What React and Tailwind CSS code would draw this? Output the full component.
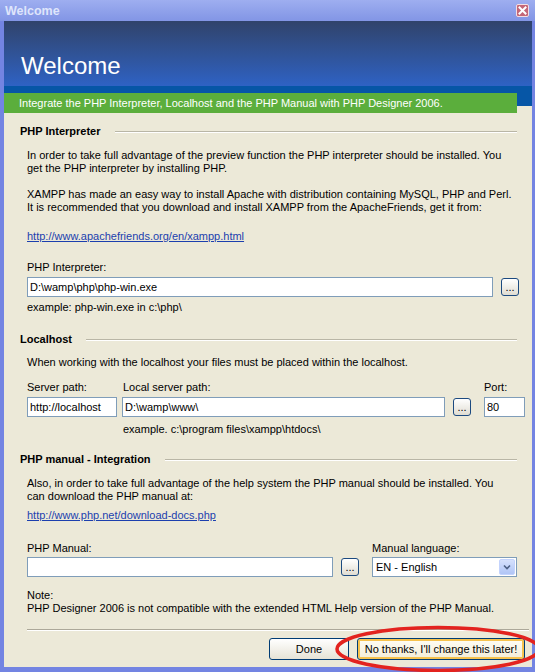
import React from "react";

function Dots() {
  return (
    <div className="w-[18px] h-[18px] shrink-0 rounded-[3px] border border-[#1c4a80] bg-gradient-to-b from-[#ffffff] to-[#e0ddd2] flex items-end justify-center text-[11px] leading-[12px] pb-[2px] text-black">
      ...
    </div>
  );
}

function Field({ className, children }) {
  return (
    <div className={"h-[20px] shrink-0 border border-[#7f9db9] bg-white pl-[2px] flex items-center leading-[13px] whitespace-nowrap " + className}>
      {children}
    </div>
  );
}

function GroupHeader({ children, className }) {
  return (
    <div className={"flex items-center pl-[16px] pr-[15px] h-[13px] leading-[13px] " + className}>
      <span className="font-bold whitespace-nowrap">{children}</span>
      <div className="flex-1 ml-[14px] h-[2px] border-t border-[#b9b6a6] border-b border-b-white" />
    </div>
  );
}

function Line({ className = "", children }) {
  return <div className={"leading-[13px] h-[13px] whitespace-nowrap " + className}>{children}</div>;
}

export default function App() {
  return (
    <div className="relative w-[535px] h-[672px] overflow-hidden bg-[#7384e2] flex flex-col font-['Liberation_Sans',Arial,sans-serif] text-[11px] text-black">
      {/* title bar */}
      <div className="h-[21px] shrink-0 flex items-center justify-between pl-[5px] pr-[6px] bg-gradient-to-b from-[#9eaef0] to-[#8295e5]">
        <span className="font-bold text-[12.5px] text-[#dfe5fb] leading-[14px] pt-[1px]">Welcome</span>
        <div className="w-[13px] h-[13px] rounded-[2px] border border-[#f3dde2] bg-[#c46677] flex items-center justify-center">
          <svg width="9" height="9" viewBox="0 0 9 9">
            <path d="M1.5 1.5 L7.5 7.5 M7.5 1.5 L1.5 7.5" stroke="#ffffff" strokeWidth="2" strokeLinecap="square" />
          </svg>
        </div>
      </div>

      {/* window body */}
      <div className="flex-1 ml-[4px] mr-[3px] mb-[5px] bg-[#ece9d8] flex flex-col">
        {/* header */}
        <div className="h-[65px] shrink-0 bg-gradient-to-b from-[#30436b] to-[#2e62c4] pl-[17px] pt-[31px]">
          <div className="text-white text-[24px] leading-[28px] font-['Liberation_Sans',Arial,sans-serif]">Welcome</div>
        </div>
        <div className="h-[27px] shrink-0 bg-[linear-gradient(to_bottom,#0656a6_20px,#ece9d8_20px)] pt-[7px]">
          <div className="h-[20px] w-[513px] bg-[#5bae3c] text-white pl-[15px] flex items-center leading-[13px]">
            Integrate the PHP Interpreter, Localhost and the PHP Manual with PHP Designer 2006.
          </div>
        </div>

        {/* PHP Interpreter */}
        <GroupHeader className="mt-[12px]">PHP Interpreter</GroupHeader>
        <div className="pl-[23px]">
          <Line className="mt-[11px]">In order to take full advantage of the preview function the PHP interpreter should be installed. You</Line>
          <Line>get the PHP interpreter by installing PHP.</Line>
          <Line className="mt-[13px]">XAMPP has made an easy way to install Apache with distribution containing MySQL, PHP and Perl.</Line>
          <Line>It is recommended that you download and install XAMPP from the ApacheFriends, get it from:</Line>
          <Line className="mt-[16px]">
            <span className="text-[#1c3fae] underline">http://www.apachefriends.org/en/xampp.html</span>
          </Line>
          <Line className="mt-[18px]">PHP Interpreter:</Line>
          <div className="mt-[3px] flex items-center">
            <Field className="w-[466px]">D:\wamp\php\php-win.exe</Field>
            <div className="ml-[8px]">
              <Dots />
            </div>
          </div>
          <Line className="mt-[4px]">example: php-win.exe in c:\php\</Line>
        </div>

        {/* Localhost */}
        <GroupHeader className="mt-[19px]">Localhost</GroupHeader>
        <div className="pl-[23px]">
          <Line className="mt-[10px]">When working with the localhost your files must be placed within the localhost.</Line>
          <div className="mt-[12px] flex items-start">
            <div className="flex flex-col w-[95px]">
              <Line>Server path:</Line>
              <Field className="mt-[3px] w-[90px]">http://localhost</Field>
            </div>
            <div className="flex flex-col w-[362px]">
              <Line className="pl-[1px]">Local server path:</Line>
              <div className="mt-[3px] flex items-center">
                <Field className="w-[323px]">D:\wamp\www\</Field>
                <div className="ml-[8px]">
                  <Dots />
                </div>
              </div>
              <Line className="mt-[6px] pl-[1px]">example. c:\program files\xampp\htdocs\</Line>
            </div>
            <div className="flex flex-col">
              <Line>Port:</Line>
              <Field className="mt-[3px] w-[41px]">80</Field>
            </div>
          </div>
        </div>

        {/* PHP manual */}
        <GroupHeader className="mt-[17px]">PHP manual - Integration</GroupHeader>
        <div className="pl-[23px]">
          <Line className="mt-[11px]">Also, in order to take full advantage of the help system the PHP manual should be installed. You</Line>
          <Line>can download the PHP manual at:</Line>
          <Line className="mt-[6px]">
            <span className="text-[#1c3fae] underline">http://www.php.net/download-docs.php</span>
          </Line>
          <div className="mt-[20px] flex items-start">
            <div className="flex flex-col w-[345px]">
              <Line>PHP Manual:</Line>
              <div className="mt-[2px] flex items-center">
                <Field className="w-[306px]" />
                <div className="ml-[8px]">
                  <Dots />
                </div>
              </div>
            </div>
            <div className="flex flex-col">
              <Line>Manual language:</Line>
              <div className="mt-[2px] w-[145px] h-[20px] border border-[#7f9db9] bg-white flex items-center justify-between pl-[3px] pr-[1px]">
                <span className="leading-[13px]">EN - English</span>
                <div className="w-[16px] h-[16px] rounded-[2px] border border-[#c3d3fd] bg-gradient-to-b from-[#d6e1fc] to-[#b0c5f6] flex items-center justify-center">
                  <svg width="8" height="6" viewBox="0 0 8 6">
                    <path d="M1 1.5 L4 4.5 L7 1.5" fill="none" stroke="#4d6185" strokeWidth="1.6" />
                  </svg>
                </div>
              </div>
            </div>
          </div>
          <Line className="mt-[12px]">Note:</Line>
          <Line>PHP Designer 2006 is not compatible with the extended HTML Help version of the PHP Manual.</Line>
        </div>

        {/* separator */}
        <div className="mt-[14px] ml-[23px] mr-[3px] h-[2px] border-t border-[#aca899] border-b border-b-white" />

        {/* buttons */}
        <div className="mt-[7px] flex justify-end pr-[7px] gap-[8px]">
          <div className="w-[80px] h-[22px] rounded-[3px] border border-[#003c74] bg-gradient-to-b from-[#ffffff] to-[#e6e3d6] flex items-center justify-center leading-[13px]">
            Done
          </div>
          <div className="w-[168px] h-[22px] rounded-[3px] border border-[#003c74] bg-gradient-to-b from-[#fffef6] to-[#f3ecd6] shadow-[inset_0_0_0_2px_#f6c24e] flex items-center justify-center leading-[13px]">
            No thanks, I'll change this later!
          </div>
        </div>
      </div>

      {/* red annotation ellipse */}
      <svg className="absolute left-[330px] top-[622px] pointer-events-none" width="220" height="56" viewBox="0 0 220 56">
        <ellipse cx="108" cy="27" rx="101" ry="21.5" fill="none" stroke="#e3231f" strokeWidth="3.5" />
      </svg>
    </div>
  );
}
